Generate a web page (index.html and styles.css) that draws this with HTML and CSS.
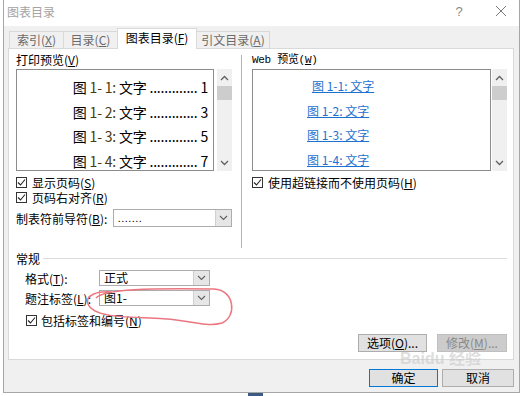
FILE: index.html
```html
<!DOCTYPE html>
<html lang="zh-CN">
<head>
<meta charset="utf-8">
<title>图表目录</title>
<link rel="stylesheet" href="styles.css">
</head>
<body>
<div class="dialog">
  <div class="titlebar">
    <span class="title">图表目录</span>
    <span class="help">?</span>
    <span class="close"><svg width="12" height="12" viewBox="0 0 12 12"><path d="M1 1 L11 11 M11 1 L1 11" stroke="#7a7a7a" stroke-width="1" fill="none"/></svg></span>
  </div>
  <div class="tabs">
    <div class="tab t1">索引(<u>X</u>)</div>
    <div class="tab t2">目录(<u>C</u>)</div>
    <div class="tab t3 active">图表目录(<u>F</u>)</div>
    <div class="tab t4">引文目录(<u>A</u>)</div>
  </div>
  <div class="panel">
    <div class="cols">
      <div class="col left">
        <div class="label">打印预览(<u>V</u>)</div>
        <div class="preview">
          <div class="pbox print">
            <div class="prow">图 <span class="n">1- 1:</span> 文字 ............. 1</div>
            <div class="prow">图 <span class="n">1- 2:</span> 文字 ............. 3</div>
            <div class="prow">图 <span class="n">1- 3:</span> 文字 ............. 5</div>
            <div class="prow">图 <span class="n">1- 4:</span> 文字 ............. 7</div>
          </div>
          <div class="sb">
            <div class="arr"><svg width="9" height="6" viewBox="0 0 9 6"><path d="M1 5 L4.5 1.5 L8 5" stroke="#606060" stroke-width="1.3" fill="none"/></svg></div>
            <div class="thumb"></div>
            <div class="track"></div>
            <div class="arr"><svg width="9" height="6" viewBox="0 0 9 6"><path d="M1 1 L4.5 4.5 L8 1" stroke="#606060" stroke-width="1.3" fill="none"/></svg></div>
          </div>
        </div>
        <div class="chk first"><span class="box"><svg width="9" height="9" viewBox="0 0 9 9"><path d="M1 4.5 L3.5 7 L8 1.5" stroke="#222" stroke-width="1.1" fill="none"/></svg></span><span class="ctext">显示页码(<u>S</u>)</span></div>
        <div class="chk"><span class="box"><svg width="9" height="9" viewBox="0 0 9 9"><path d="M1 4.5 L3.5 7 L8 1.5" stroke="#222" stroke-width="1.1" fill="none"/></svg></span><span class="ctext">页码右对齐(<u>R</u>)</span></div>
        <div class="leader">
          <span class="llabel">制表符前导符(<u>B</u>):</span>
          <div class="combo wide"><span class="cval">. . . . . . .</span><span class="cbtn"><svg width="9" height="6" viewBox="0 0 9 6"><path d="M1 1 L4.5 4.5 L8 1" stroke="#606060" stroke-width="1.1" fill="none"/></svg></span></div>
        </div>
      </div>
      <div class="divider"></div>
      <div class="col right">
        <div class="label mono">Web 预览(<u>W</u>)</div>
        <div class="preview">
          <div class="pbox web">
            <div class="wrow first"><a>图 1-1: 文字</a></div>
            <div class="wrow"><a>图 1-2: 文字</a></div>
            <div class="wrow"><a>图 1-3: 文字</a></div>
            <div class="wrow"><a>图 1-4: 文字</a></div>
          </div>
          <div class="sb">
            <div class="arr"><svg width="9" height="6" viewBox="0 0 9 6"><path d="M1 5 L4.5 1.5 L8 5" stroke="#606060" stroke-width="1.3" fill="none"/></svg></div>
            <div class="thumb"></div>
            <div class="track"></div>
            <div class="arr"><svg width="9" height="6" viewBox="0 0 9 6"><path d="M1 1 L4.5 4.5 L8 1" stroke="#606060" stroke-width="1.3" fill="none"/></svg></div>
          </div>
        </div>
        <div class="chk first"><span class="box"><svg width="9" height="9" viewBox="0 0 9 9"><path d="M1 4.5 L3.5 7 L8 1.5" stroke="#222" stroke-width="1.1" fill="none"/></svg></span><span class="ctext">使用超链接而不使用页码(<u>H</u>)</span></div>
      </div>
    </div>
    <div class="ghead"><span>常规</span><span class="gline"></span></div>
    <div class="frow first">
      <span class="flabel">格式(<u>T</u>):</span>
      <div class="combo"><span class="cval">正式</span><span class="cbtn"><svg width="9" height="6" viewBox="0 0 9 6"><path d="M1 1 L4.5 4.5 L8 1" stroke="#606060" stroke-width="1.1" fill="none"/></svg></span></div>
    </div>
    <div class="frow">
      <span class="flabel">题注标签(<u>L</u>):</span>
      <div class="combo"><span class="cval">图1-</span><span class="cbtn"><svg width="9" height="6" viewBox="0 0 9 6"><path d="M1 1 L4.5 4.5 L8 1" stroke="#606060" stroke-width="1.1" fill="none"/></svg></span></div>
    </div>
    <div class="chk inc"><span class="box"><svg width="9" height="9" viewBox="0 0 9 9"><path d="M1 4.5 L3.5 7 L8 1.5" stroke="#222" stroke-width="1.1" fill="none"/></svg></span><span class="ctext">包括标签和编号(<u>N</u>)</span></div>
    <div class="pbtns">
      <div class="btn opt">选项(<u>O</u>)...</div>
      <div class="btn dis">修改(<u>M</u>)...</div>
    </div>
  </div>
  <div class="footer">
    <div class="btn ok">确定</div>
    <div class="btn cancel">取消</div>
  </div>
</div>
<div class="outside-strip"><span class="blueblock"></span></div>
<svg class="mark" width="524" height="396" viewBox="0 0 524 396">
  <path d="M96 298 C104 289, 150 288, 214 289 C235 290, 237 317, 222 323 C205 328, 192 319, 150 318 C118 317, 93 316, 88 304 C85 295, 97 291, 112 292" stroke="#eb7680" stroke-width="1.5" fill="none"/>
</svg>
<div class="wm">
  <div class="wm1">Bai<span class="paw">du</span> 经验</div>
</div>
</body>
</html>
```
FILE: styles.css
```css
body {
  margin: 0;
  width: 524px;
  height: 396px;
  overflow: hidden;
  background: #ffffff;
  font-family: "Noto Sans CJK SC", "Noto Sans", sans-serif;
  font-size: 12px;
  color: #000;
  position: relative;
}
u { text-decoration: underline; text-underline-offset: 1px; }

.dialog {
  margin-left: 3px;
  width: 517px;
  height: 393px;
  box-sizing: border-box;
  background: #f0f0f0;
  border: 1px solid #a6a6a6;
  border-top: none;
  display: flex;
  flex-direction: column;
}

.titlebar {
  height: 26px;
  background: #ffffff;
  display: flex;
  align-items: center;
  padding-left: 3px;
  padding-right: 8px;
  line-height: 14px;
}
.title { flex: 1; color: #a3a3a3; font-size: 12px; margin-top: -2px; }
.help { width: 20px; text-align: center; color: #8a8a8a; font-family: "Liberation Sans", sans-serif; font-size: 13px; margin-right: 22px; margin-top: -2px; }
.close { width: 20px; display: flex; justify-content: center; margin-top: -4px; }

.tabs {
  height: 22px;
  display: flex;
  align-items: flex-end;
  padding-left: 5px;
  position: relative;
  z-index: 1;
}
.tab {
  height: 17px;
  box-sizing: border-box;
  border: 1px solid #d9d9d9;
  border-bottom: none;
  background: #f0f0f0;
  color: #6a6a6a;
  display: flex;
  align-items: center;
  justify-content: center;
  line-height: 14px;
  margin-right: -1px;
}
.t1 { width: 55px; }
.t2 { width: 55px; }
.t3 { width: 80px; }
.t4 { width: 74px; }
.tab.active {
  height: 21px;
  margin-bottom: -1px;
  background: #ffffff;
  color: #000;
  position: relative;
  z-index: 2;
  padding-bottom: 2px;
}

.panel {
  margin-left: 4px;
  width: 506px;
  height: 312px;
  box-sizing: border-box;
  background: #ffffff;
  border: 1px solid #d9d9d9;
  padding: 3px 5px 0 7px;
}

.cols { display: flex; height: 196px; }
.col.left { width: 216px; }
.divider { width: 1px; background: #b4b4b4; margin: 3px 0 0 9px; }
.col.right { width: 255px; margin-left: 10px; }

.label { height: 16px; line-height: 16px; }
.label.mono { font-family: "Liberation Mono", "Noto Sans CJK SC", monospace; font-size: 11px; letter-spacing: -0.3px; }

.preview { display: flex; height: 102px; margin-top: 1px; gap: 3px; }
.right .preview { gap: 1px; }
.pbox {
  flex: 1;
  box-sizing: border-box;
  border: 1px solid #8c8c8c;
  overflow: hidden;
}
.print { padding: 5px 5px 0 0; }
.prow { height: 24.5px; line-height: 24.5px; text-align: right; font-size: 14px; white-space: nowrap; letter-spacing: -0.2px; }
.prow .n { color: #4a3a10; }
.web { padding-top: 4px; }
.wrow { height: 24.6px; line-height: 24.6px; padding-left: 54px; white-space: nowrap; }
.wrow.first { padding-left: 59px; }
.wrow a { color: #1e72cf; text-decoration: underline; text-underline-offset: 1px; }

.sb { width: 15px; background: #f0f0f0; display: flex; flex-direction: column; }
.arr { height: 17px; display: flex; align-items: center; justify-content: center; }
.thumb { height: 14px; background: #cdcdcd; }
.track { flex: 1; }

.chk { display: flex; align-items: center; height: 15px; }
.chk.first { margin-top: 4px; }
.ctext { display: block; height: 15px; line-height: 15px; overflow: hidden; font-size: 12px; }
.box {
  width: 11px;
  height: 11px;
  box-sizing: border-box;
  border: 1px solid #333;
  background: #fff;
  display: flex;
  align-items: center;
  justify-content: center;
  margin-right: 5px;
  flex: none;
}

.leader { display: flex; align-items: center; height: 18px; margin-top: 4px; }
.llabel { width: 97px; }

.combo {
  width: 111px;
  height: 100%;
  box-sizing: border-box;
  border: 1px solid #acacac;
  background: #fff;
  display: flex;
  align-items: center;
}
.combo.wide { width: 119px; }
.cval { flex: 1; padding-left: 4px; line-height: 14px; }
.combo.wide .cval { font-size: 9px; letter-spacing: -0.5px; padding-top: 2px; }
.cbtn {
  width: 15px;
  height: 100%;
  background: #e6e6e6;
  border-left: 1px solid #d0d0d0;
  display: flex;
  align-items: center;
  justify-content: center;
}

.ghead { display: flex; align-items: center; height: 16px; margin-top: 2px; width: 491px; }
.gline { flex: 1; height: 1px; background: #dcdcdc; margin-left: 3px; }

.frow { display: flex; align-items: center; height: 16px; margin-top: 4px; padding-left: 9px; }
.flabel { width: 74px; }

.chk.inc { margin-top: 6px; height: 16px; padding-left: 10px; }
.chk.inc .box { margin-right: 4px; }

.pbtns { display: flex; justify-content: flex-end; gap: 10px; margin-top: 6px; margin-right: 1px; }
.btn {
  height: 18px;
  box-sizing: border-box;
  border: 1px solid #adadad;
  background: #e1e1e1;
  display: flex;
  align-items: center;
  justify-content: center;
  line-height: 14px;
}
.opt { width: 69px; }
.dis { width: 70px; background: #cccccc; border-color: #bfbfbf; color: #8a8a8a; }

.footer { display: flex; justify-content: flex-end; gap: 4px; padding: 9px 5px 0 0; }
.ok { width: 69px; border-color: #0078d7; }
.cancel { width: 72px; }

.outside-strip { height: 3px; position: relative; }
.blueblock { position: absolute; left: 248px; top: 0; width: 15px; height: 3px; background: #3d5a80; }

.mark { position: absolute; left: 0; top: 0; pointer-events: none; }

.wm {
  position: absolute;
  left: 400px;
  top: 350px;
  color: rgba(200, 200, 200, 0.6);
  font-family: "Liberation Sans", "Noto Sans CJK SC", sans-serif;
  pointer-events: none;
}
.wm1 { font-size: 16px; font-weight: bold; line-height: 18px; }
```
